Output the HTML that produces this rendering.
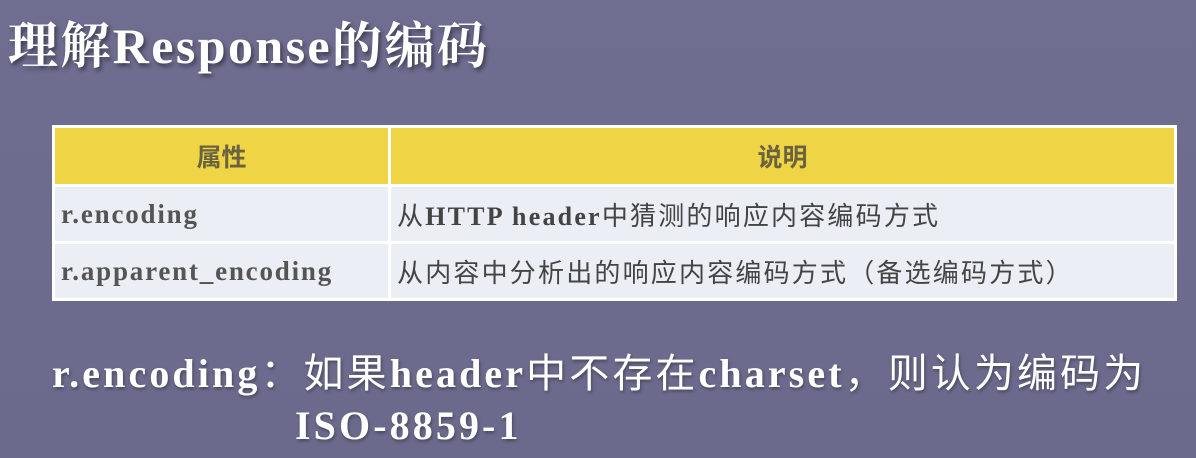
<!DOCTYPE html>
<html><head><meta charset="utf-8"><style>
body{margin:0;width:1196px;height:458px;overflow:hidden;background:linear-gradient(#6f6d90,#6b6a8c);font-family:"Liberation Serif","Noto Serif CJK SC",serif;position:relative}
.t{position:absolute;left:8px;top:6px;font-size:50px;font-weight:bold;color:#fff;text-shadow:2px 3px 4px rgba(0,0,0,.45);white-space:nowrap;letter-spacing:2.4px}
table{position:absolute;left:52px;top:125px;width:1125px;border-collapse:separate;border-spacing:3px;background:#fff}
td{height:54px;font-size:27px;color:#555;font-weight:bold;padding:0 6px;background:#eceef6;vertical-align:middle;letter-spacing:1.8px}
td.c2{font-weight:normal;font-family:"Liberation Sans","Noto Sans CJK SC",sans-serif;font-size:26px;color:#444;letter-spacing:2.2px}
th{height:54px;background:#efd545;color:#6a6340;font-size:25px;font-family:"Noto Sans CJK SC",sans-serif;font-weight:bold}
.b{position:absolute;left:52px;top:344px;font-size:40px;font-weight:bold;color:#fff;line-height:52px;white-space:nowrap;text-shadow:1px 2px 3px rgba(0,0,0,.35);letter-spacing:3.1px}
.b span{font-family:"Noto Sans CJK SC",sans-serif;font-weight:normal}
</style></head><body>
<div class="t">理解Response的编码</div>
<table>
<tr><th style="width:331px">属性</th><th>说明</th></tr>
<tr><td>r.encoding</td><td class="c2">从<b style="font-family:'Liberation Serif'">HTTP header</b>中猜测的响应内容编码方式</td></tr>
<tr><td>r.apparent_encoding</td><td class="c2">从内容中分析出的响应内容编码方式（备选编码方式）</td></tr>
</table>
<div class="b">r.encoding<span>：如果</span>header<span>中不存在</span>charset<span>，则认为编码为</span><br><span style="margin-left:243px;font-family:'Liberation Serif';font-weight:bold">ISO-8859-1</span></div>
</body></html>
